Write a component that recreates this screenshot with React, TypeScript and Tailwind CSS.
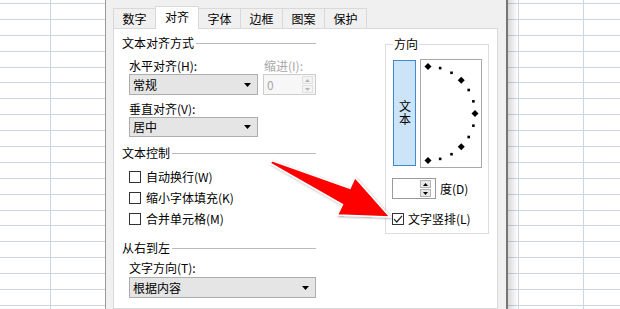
import React from 'react';

const GRID = 'border-[#cdd4e4]';

function Column({ className }: { className: string }) {
  const rows = Array.from({ length: 20 });
  return (
    <div className={`flex flex-col ${className}`}>
      <div className={`h-[4px] shrink-0 border-b ${GRID}`} />
      {rows.map((_, i) => (
        <div key={i} className={`h-[15.9px] shrink-0 border-b ${GRID}`} />
      ))}
    </div>
  );
}

function SectionHeader({ title }: { title: string }) {
  return (
    <div className="flex h-[16px] items-center">
      <span className="leading-[16px]">{title}</span>
      <div className="ml-[2px] h-px flex-1 bg-[#b9b9b9]" />
    </div>
  );
}

function Select({ value }: { value: string }) {
  return (
    <div className="flex h-[21px] items-center justify-between border border-[#adadad] bg-[#e5e5e5] pl-[3px] pr-[6px]">
      <span className="leading-[16px]">{value}</span>
      <svg width="7" height="4" viewBox="0 0 7 4">
        <polygon points="0,0 7,0 3.5,4" fill="#000" />
      </svg>
    </div>
  );
}

function SpinButtons({ disabled }: { disabled?: boolean }) {
  const fill = disabled ? '#b5b5b5' : '#000';
  const box = disabled ? 'border-[#e0e0e0] bg-[#f3f3f3]' : 'border-[#b4b4b4] bg-[#e8e8e8]';
  return (
    <div className="flex flex-col gap-px py-px">
      <div className={`flex h-[8px] w-[11px] items-center justify-center border ${box}`}>
        <svg width="5" height="3" viewBox="0 0 5 3">
          <polygon points="2.5,0 5,3 0,3" fill={fill} />
        </svg>
      </div>
      <div className={`flex h-[8px] w-[11px] items-center justify-center border ${box}`}>
        <svg width="5" height="3" viewBox="0 0 5 3">
          <polygon points="0,0 5,0 2.5,3" fill={fill} />
        </svg>
      </div>
    </div>
  );
}

function Checkbox({ label, checked }: { label: string; checked?: boolean }) {
  return (
    <div className="flex h-[21px] items-center">
      <div className="flex h-[12px] w-[12px] items-center justify-center border border-[#333333] bg-white">
        {checked && (
          <svg width="10" height="10" viewBox="0 0 10 10">
            <path d="M1 5.2 L3.8 8 L9 1.8" fill="none" stroke="#222" strokeWidth="1.2" />
          </svg>
        )}
      </div>
      <span className="ml-[5px] leading-[16px]">{label}</span>
    </div>
  );
}

function Dial() {
  const cx = 7;
  const cy = 53.5;
  const r = 47;
  const marks = [];
  for (let a = 90; a >= -90; a -= 15) {
    const rad = (a * Math.PI) / 180;
    const x = cx + r * Math.cos(rad);
    const y = cy - r * Math.sin(rad);
    if (a % 45 === 0) {
      marks.push(
        <polygon
          key={a}
          points={`${x},${y - 3.5} ${x + 3.5},${y} ${x},${y + 3.5} ${x - 3.5},${y}`}
          fill="#000"
        />
      );
    } else {
      marks.push(<rect key={a} x={x - 1.3} y={y - 1.3} width="2.6" height="2.6" fill="#000" />);
    }
  }
  return (
    <svg width="60" height="107" viewBox="0 0 60 107">
      {marks}
    </svg>
  );
}

const TABS = ['数字', '对齐', '字体', '边框', '图案', '保护'];

export default function App() {
  return (
    <div className="relative flex h-[309px] w-[620px] overflow-hidden bg-white font-['Noto_Sans_CJK_SC',sans-serif] text-[12px] text-black">
      {/* sheet on the left */}
      <div className="flex h-full w-[105px] shrink-0">
        <Column className={`w-[51px] border-r ${GRID}`} />
        <Column className="flex-1" />
      </div>

      {/* format cells dialog */}
      <div className="flex h-full w-[403px] shrink-0 flex-col border-l border-r-2 border-l-[#9a9a9a] border-r-[#767676] bg-[#f0f0f0] pl-[7px] pr-[8px] pt-[6px]">
        <div className="flex h-[22px] items-end">
          {TABS.map((t, i) => (
            <div
              key={t}
              className={
                i === 1
                  ? 'relative z-10 -mb-px -ml-px flex h-[23px] w-[44px] items-center justify-center border border-b-0 border-[#d9d9d9] bg-white pb-[2px]'
                  : `flex h-[20px] w-[43px] items-center justify-center border border-b-0 border-[#d9d9d9] bg-[#f0f0f0] ${i === 0 ? '' : '-ml-px'}`
              }
            >
              {t}
            </div>
          ))}
        </div>

        <div className="flex flex-1 border border-[#d9d9d9] bg-white pl-[8px] pr-[8px]">
          {/* left column */}
          <div className="flex w-[194px] flex-col pt-[6px]">
            <SectionHeader title="文本对齐方式" />
            <div className="mt-[7px] grid grid-cols-[129px_53px] gap-x-[5px] pl-[7px]">
              <div className="leading-[16px]">水平对齐(H):</div>
              <div className="pl-px leading-[16px] text-[#a8a8a8]">缩进(I):</div>
              <Select value="常规" />
              <div className="flex h-[21px] items-center justify-between border border-[#cccccc] bg-[#f7f7f7] pl-[3px] pr-[2px]">
                <span className="leading-[16px] text-[#a8a8a8]">0</span>
                <SpinButtons disabled />
              </div>
            </div>
            <div className="mt-[6px] w-[136px] pl-[7px]">
              <div className="leading-[16px]">垂直对齐(V):</div>
              <div className="h-[20px] [&>div]:h-[20px]">
                <Select value="居中" />
              </div>
            </div>

            <div className="mt-[8px]">
              <SectionHeader title="文本控制" />
            </div>
            <div className="mt-[5px] pl-[7px]">
              <Checkbox label="自动换行(W)" />
              <Checkbox label="缩小字体填充(K)" />
              <Checkbox label="合并单元格(M)" />
            </div>

            <div className="mt-[11px]">
              <SectionHeader title="从右到左" />
            </div>
            <div className="mt-[4px] pl-[7px]">
              <div className="leading-[16px]">文字方向(T):</div>
              <div className="mt-px">
                <Select value="根据内容" />
              </div>
            </div>
          </div>

          {/* orientation group */}
          <div className="ml-auto pt-[7px]">
            <fieldset className="h-[198px] w-[104px] border border-[#dcdcdc] p-0">
              <legend className="ml-[7px] px-[1px] leading-[16px]">方向</legend>
              <div className="mt-[7px] flex items-start pl-[7px]">
                <div className="mt-px flex h-[106px] w-[23px] items-center justify-center border border-[#3f8ad0] bg-[#cce4f7]">
                  <span className="leading-[16px] tracking-[1px] [writing-mode:vertical-rl]">文本</span>
                </div>
                <div className="ml-[4px] h-[109px] w-[62px] border border-[#a8a8a8] bg-white">
                  <Dial />
                </div>
              </div>
              <div className="mt-[10px] flex items-center pl-[6px]">
                <div className="flex h-[21px] w-[44px] justify-end border border-[#9a9a9a] bg-white pr-[4px]">
                  <SpinButtons />
                </div>
                <span className="ml-[4px] leading-[16px]">度(D)</span>
              </div>
              <div className="mt-[9px] pl-[6px] [&>div>span]:ml-[4px]">
                <Checkbox label="文字竖排(L)" checked />
              </div>
            </fieldset>
          </div>
        </div>
      </div>

      {/* sheet on the right */}
      <div className="relative flex h-full flex-1">
        <Column className={`w-[11px] border-r ${GRID}`} />
        <Column className={`w-[65px] border-r ${GRID}`} />
        <Column className="flex-1" />
        <div className="absolute left-0 top-0 h-full w-[10px] bg-gradient-to-r from-black/15 to-transparent" />
      </div>

      {/* red pointer arrow */}
      <svg className="pointer-events-none absolute left-0 top-0" width="620" height="309" viewBox="0 0 620 309">
        <defs>
          <filter id="sh" x="-20%" y="-20%" width="140%" height="140%">
            <feDropShadow dx="1" dy="1" stdDeviation="1.2" floodColor="#000" floodOpacity="0.35" />
          </filter>
        </defs>
        <polygon
          points="271.6,160.6 350,188.3 355,177.5 390,217 337.5,215 342.5,204.6 270.4,163.4"
          fill="#ff0000"
          stroke="#ffffff"
          strokeWidth="1.5"
          strokeLinejoin="miter"
          filter="url(#sh)"
        />
      </svg>
    </div>
  );
}
